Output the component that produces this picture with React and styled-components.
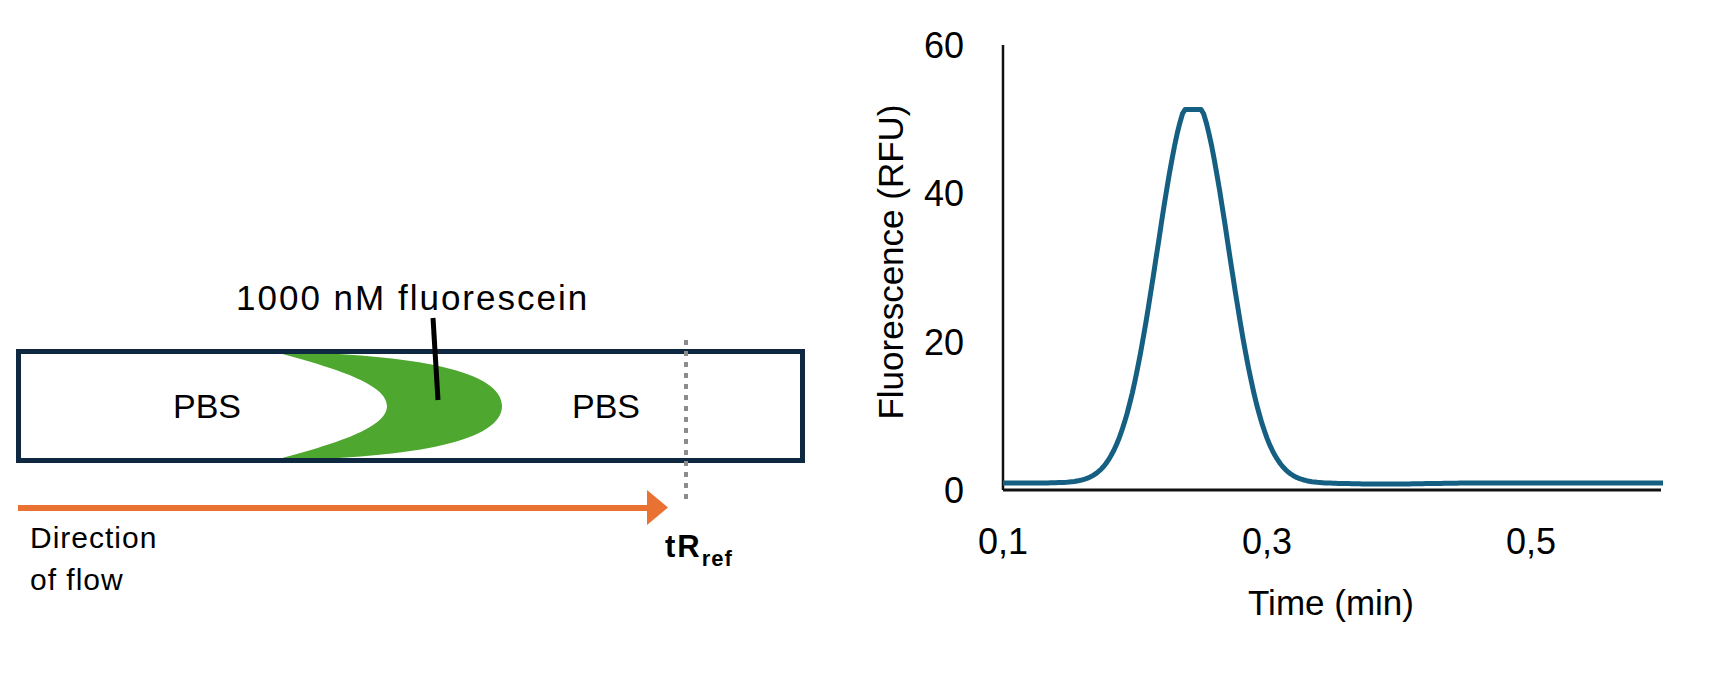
import React from 'react'
import styled, { createGlobalStyle } from 'styled-components'

// Office 2023 theme colours
const NAVY = '#0E2841'
const BLUE = '#156082'
const ORANGE = '#E97132'
const GREEN = '#4EA72E'

// chart scale (page coordinates)
const X0 = 1003
const PX_PER_MIN = 1320
const Y0 = 490
const PX_PER_RFU = 7.42

const toX = (t) => X0 + (t - 0.1) * PX_PER_MIN
const toY = (v) => Y0 - v * PX_PER_RFU

const signal = (t) => {
    const peak = 52 * Math.exp(-((t - 0.244) ** 2) / (2 * 0.027 * 0.027))
    // small dip in the baseline after the peak
    const dip = 0.15 * Math.exp(-((t - 0.39) ** 2) / (2 * 0.03 * 0.03))
    return Math.min(0.95 - dip + peak, 51.3)
}

const buildPath = () => {
    const pts = []
    for (let t = 0.1; t <= 0.6001; t += 0.002) {
        pts.push(`${toX(t).toFixed(1)},${toY(signal(t)).toFixed(1)}`)
    }
    return 'M' + pts.join(' L')
}

const yTicks = [0, 20, 40, 60]
const xTicks = [
    { t: 0.1, label: '0,1' },
    { t: 0.3, label: '0,3' },
    { t: 0.5, label: '0,5' },
]

const App = () => {
    const curve = buildPath()
    return (
        <>
            <GlobalStyle />
            <Figure>
                <DiagramPanel viewBox="0 0 820 675">
                    {/* plug of fluorescein inside the tube */}
                    <path
                        d="M275 352 C335 368 387 384 387 406 C387 428 335 444 275 460
                           C420 458 502 440 502 406 C502 372 420 354 275 352 Z"
                        fill={GREEN}
                    />
                    <Tube x="18.5" y="351.5" width="784" height="109" />
                    <Pointer x1="433" y1="318" x2="438" y2="400" />
                    <Label x="236" y="310" $size={35} $track={2}>1000 nM fluorescein</Label>
                    <Label x="207" y="418" $size={34} $anchor="middle">PBS</Label>
                    <Label x="606" y="418" $size={34} $anchor="middle">PBS</Label>

                    <Marker x1="686" y1="340" x2="686" y2="505" />

                    <FlowLine x1="18" y1="508" x2="649" y2="508" />
                    <polygon points="647,490 668,507.5 647,525" fill={ORANGE} />

                    <Label x="30" y="548" $size={30} $track={1}>Direction</Label>
                    <Label x="30" y="590" $size={30} $track={1}>of flow</Label>

                    <Label x="665" y="557" $size={31} $bold $track={2}>
                        tR<tspan fontSize="22" dy="9" letterSpacing="1">ref</tspan>
                    </Label>
                </DiagramPanel>

                <ChartPanel viewBox="820 0 908 675">
                    <Axis x1={X0} y1="45" x2={X0} y2={Y0} $w={2.5} />
                    <Axis x1={X0} y1={Y0} x2="1661" y2={Y0} $w={3} />

                    {yTicks.map((v) => (
                        <Label key={v} x="964" y={toY(v) + 13} $size={36} $anchor="end">
                            {v}
                        </Label>
                    ))}
                    {xTicks.map((tick) => (
                        <Label key={tick.label} x={toX(tick.t)} y="554" $size={36} $anchor="middle">
                            {tick.label}
                        </Label>
                    ))}

                    <Label x="1331" y="615" $size={35} $anchor="middle">Time (min)</Label>
                    <Label
                        x="903"
                        y="262"
                        $size={35}
                        $anchor="middle"
                        transform="rotate(-90 903 262)"
                    >
                        Fluorescence (RFU)
                    </Label>

                    <Trace d={curve} />
                </ChartPanel>
            </Figure>
        </>
    )
}

const GlobalStyle = createGlobalStyle`
    html, body {
        margin: 0;
        padding: 0;
        background: #ffffff;
    }
`

const Figure = styled.div`
    display: flex;
    flex-direction: row;
    width: 1728px;
    height: 675px;
    background: #ffffff;
    overflow: hidden;
`

const DiagramPanel = styled.svg`
    display: block;
    flex: 0 0 820px;
    width: 820px;
    height: 675px;
`

const ChartPanel = styled.svg`
    display: block;
    flex: 0 0 908px;
    width: 908px;
    height: 675px;
`

const Label = styled.text`
    font-family: 'Liberation Sans', Arial, sans-serif;
    font-size: ${(p) => p.$size}px;
    font-weight: ${(p) => (p.$bold ? 700 : 400)};
    letter-spacing: ${(p) => p.$track || 0}px;
    text-anchor: ${(p) => p.$anchor || 'start'};
    fill: #000000;
`

const Tube = styled.rect`
    fill: none;
    stroke: ${NAVY};
    stroke-width: 5;
`

const Pointer = styled.line`
    stroke: #000000;
    stroke-width: 5;
`

const Marker = styled.line`
    stroke: #8c8c8c;
    stroke-width: 4;
    stroke-dasharray: 5 6;
`

const FlowLine = styled.line`
    stroke: ${ORANGE};
    stroke-width: 6;
`

const Axis = styled.line`
    stroke: #111111;
    stroke-width: ${(p) => p.$w};
`

const Trace = styled.path`
    fill: none;
    stroke: ${BLUE};
    stroke-width: 5;
    stroke-linejoin: round;
`

export default App
